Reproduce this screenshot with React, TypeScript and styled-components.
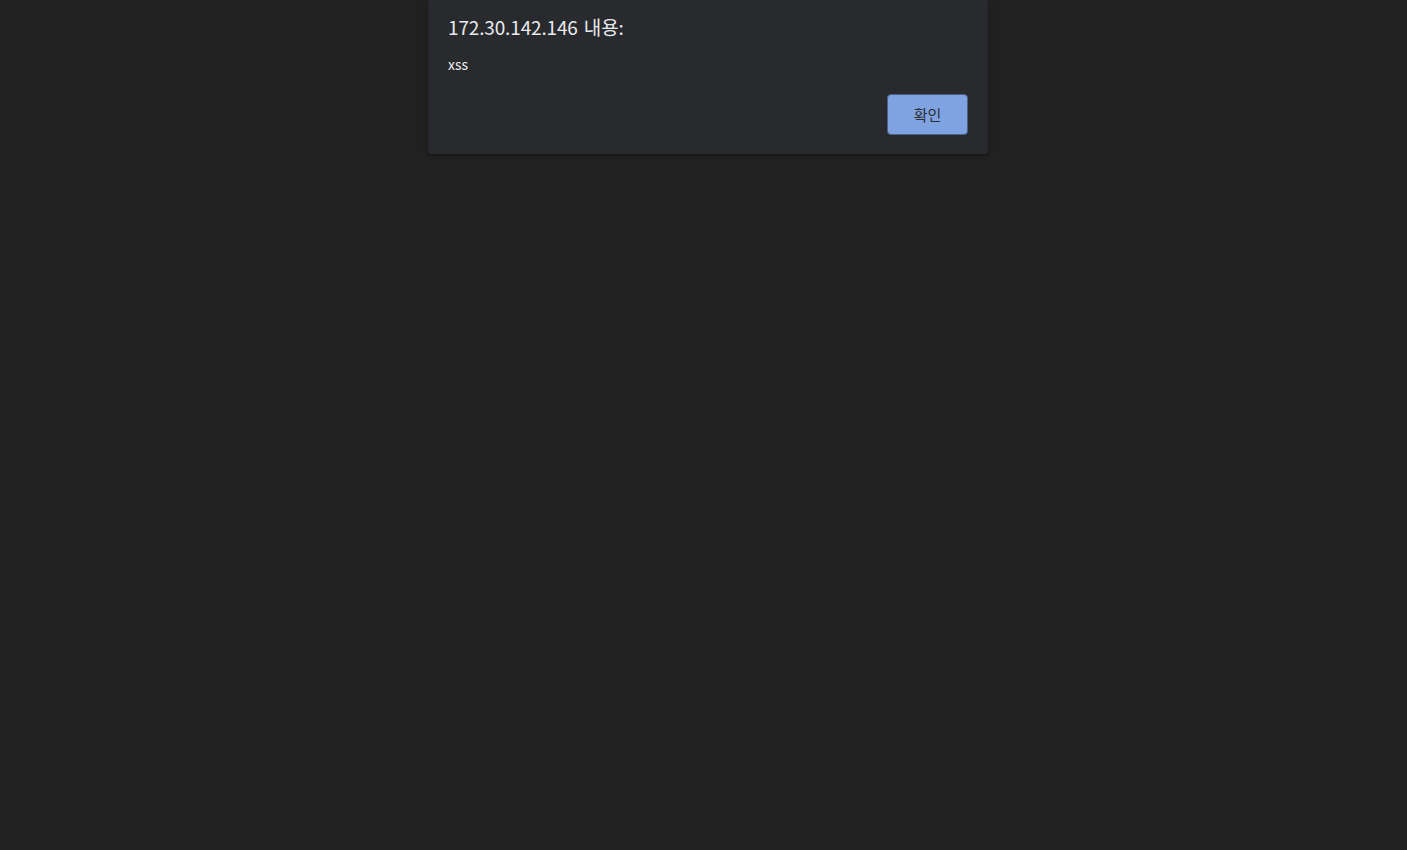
import React from 'react';
import styled, { createGlobalStyle } from 'styled-components';

const GlobalStyle = createGlobalStyle`
  html, body {
    margin: 0;
    padding: 0;
    background: #212121;
    height: 100%;
  }
  #root {
    min-height: 100vh;
  }
`;

const Page = styled.div`
  min-height: 100vh;
  box-sizing: border-box;
  padding-left: 9px;
  display: flex;
  justify-content: center;
  align-items: flex-start;
  background: #212121;
  font-family: "Noto Sans CJK KR", "Noto Sans", sans-serif;
`;

const Dialog = styled.div`
  width: 560px;
  box-sizing: border-box;
  background: #292a2d;
  border-radius: 0 0 4px 4px;
  box-shadow: 0 1px 4px rgba(0, 0, 0, 0.35);
  padding: 14px 20px 19px 20px;
  display: flex;
  flex-direction: column;
`;

const Title = styled.div`
  color: #e8eaed;
  font-size: 19px;
  line-height: 26px;
  letter-spacing: -0.15px;
  word-spacing: 2px;
`;

const Message = styled.div`
  color: #e8eaed;
  font-size: 14px;
  line-height: 20px;
  margin-top: 14px;
`;

const Actions = styled.div`
  display: flex;
  justify-content: flex-end;
  margin-top: 20px;
`;

const Button = styled.button`
  width: 81px;
  height: 41px;
  box-sizing: border-box;
  background: #7fa3e0;
  border: 1px solid #4d5f82;
  border-radius: 4px;
  color: #2a2c33;
  font-family: "Noto Sans CJK KR", "Noto Sans", sans-serif;
  font-size: 15px;
  cursor: pointer;
  padding: 0;
`;

export default function App() {
  return (
    <Page>
      <GlobalStyle />
      <Dialog>
        <Title>172.30.142.146 내용:</Title>
        <Message>xss</Message>
        <Actions>
          <Button>확인</Button>
        </Actions>
      </Dialog>
    </Page>
  );
}
